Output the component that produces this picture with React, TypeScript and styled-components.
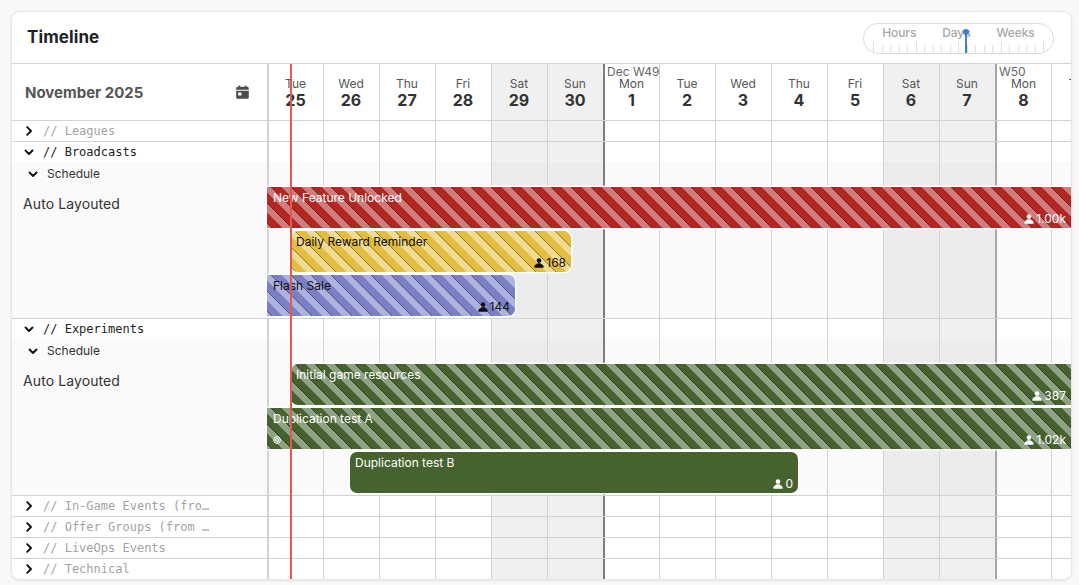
import styled, { createGlobalStyle } from "styled-components";

const GlobalStyle = createGlobalStyle`
  html, body {
    margin: 0;
    padding: 0;
    background: #f8f8f8;
    font-family: "Inter", "Liberation Sans", sans-serif;
  }
  * { box-sizing: border-box; }
`;

const LINE = "#d2d2d2";

const Page = styled.div`
  width: 1079px;
  height: 585px;
  padding: 11px 7px 5px 11px;
  overflow: hidden;
`;

const Card = styled.div`
  position: relative;
  width: 1061px;
  height: 569px;
  background: #fff;
  border: 1px solid #e6e6e6;
  border-radius: 9px;
  box-shadow: 0 1px 3px rgba(0, 0, 0, 0.08);
  overflow: hidden;
`;

const TopBar = styled.header`
  height: 52px;
  padding: 0 17px 0 15px;
  display: flex;
  align-items: center;
  justify-content: space-between;
  border-bottom: 1px solid ${LINE};
`;

const Title = styled.h1`
  margin: -2px 0 0;
  font-size: 17px;
  letter-spacing: 0.1px;
  font-weight: 700;
  color: #222;
`;

const Zoomer = styled.div`
  position: relative;
  width: 191px;
  height: 31px;
  margin-top: 1px;
  border: 1px solid #dcdcdc;
  border-radius: 15px;
  padding: 2px 8px 0;
  display: flex;
  flex-direction: column;
  justify-content: space-between;
`;

const ZoomLabels = styled.div`
  display: flex;
  justify-content: center;
  gap: 26px;
  font-size: 12px;
  letter-spacing: -0.1px;
  line-height: 14px;
  font-weight: 500;
  color: #a8a8a8;
`;

const Ruler = styled.div`
  display: flex;
  justify-content: space-between;
  align-items: flex-end;
  padding: 0 1px 0 1px;
`;

const Tick = styled.i<{ $major: boolean }>`
  width: 1px;
  height: ${(p) => (p.$major ? 11 : 8)}px;
  background: #e0e0e0;
`;

const Needle = styled.div`
  position: absolute;
  left: 101px;
  top: 6px;
  bottom: 0;
  width: 2px;
  background: #3f7fd0;
  &::before {
    content: "";
    position: absolute;
    top: -1px;
    left: -2px;
    width: 6px;
    height: 6px;
    border-radius: 50%;
    background: #3f7fd0;
  }
`;

const Row = styled.div<{ $height: number; $line?: boolean; $tint?: boolean }>`
  display: flex;
  height: ${(p) => p.$height}px;
  background: ${(p) => (p.$tint ? "#fafafa" : "#fff")};
  border-bottom: ${(p) => (p.$line ? `1px solid ${LINE}` : "none")};
`;

const Side = styled.div`
  flex: 0 0 257px;
  border-right: 2px solid ${LINE};
  overflow: hidden;
`;

const MonthSide = styled(Side)`
  display: flex;
  align-items: center;
  justify-content: space-between;
  padding: 0 18px 0 13px;
  font-size: 15px;
  font-weight: 700;
  color: #555;
`;

const RowSide = styled(Side)`
  display: flex;
  align-items: center;
  gap: 9px;
  padding-left: 12px;
`;

const GroupName = styled.span<{ $muted?: boolean }>`
  font-family: "DejaVu Sans Mono", "Liberation Mono", monospace;
  font-size: 12px;
  color: ${(p) => (p.$muted ? "#a3a3a3" : "#222")};
  white-space: nowrap;
`;

const ScheduleSide = styled(Side)`
  padding: 0;
`;

const ScheduleHead = styled.div`
  display: flex;
  align-items: center;
  gap: 9px;
  height: 23px;
  padding-left: 16px;
  font-size: 12px;
  color: #333;
`;

const LaneLabel = styled.div`
  margin-top: 10px;
  padding-left: 11px;
  font-size: 14px;
  letter-spacing: 0.1px;
  line-height: 17px;
  color: #333;
`;

const Track = styled.div`
  position: relative;
  flex: 1;
  display: flex;
  min-width: 0;
`;

type Edge = "month" | "week" | undefined;
const edgeColor = (e: Edge) => (e === "month" ? "#7c7c7c" : e === "week" ? "#a6a6a6" : LINE);

const DayCell = styled.div<{ $weekend: boolean; $tint?: boolean; $before: Edge; $after: Edge }>`
  flex: 0 0 56px;
  background: ${(p) => (p.$weekend ? (p.$tint ? "#ececec" : "#f0f0f0") : "transparent")};
  border-right: 1px solid ${(p) => edgeColor(p.$before)};
  border-left: ${(p) => (p.$after ? `1px solid ${edgeColor(p.$after)}` : "none")};
  &:first-child {
    flex-basis: 55px;
  }
`;

const HeadCell = styled(DayCell)`
  position: relative;
  display: flex;
  flex-direction: column;
  align-items: center;
  justify-content: center;
  padding: 1px 1px 0 0;
`;

const DayName = styled.span`
  font-size: 12px;
  line-height: 14px;
  color: #555;
`;

const DayNum = styled.span`
  font-size: 16px;
  line-height: 18px;
  font-weight: 700;
  color: #333;
`;

const WeekTag = styled.span`
  position: absolute;
  top: 1px;
  left: 2px;
  font-size: 12px;
  line-height: 14px;
  color: #666;
  white-space: nowrap;
`;

const Lanes = styled.div`
  position: absolute;
  top: 25px;
  left: -2px;
  right: 0;
  display: flex;
  flex-direction: column;
  gap: 3px;
`;

const palettes = {
  red: { base: "#b32723", light: "#d17c7c", edge: "#7f1c19", text: "#fff" },
  yellow: { base: "#e3bd3f", light: "#efdb92", edge: "#94792a", text: "#111" },
  blue: { base: "#7a80c4", light: "#aeb2de", edge: "#50547f", text: "#111" },
  green: { base: "#46632f", light: "#8fa384", edge: "#2a3b1c", text: "#fff" },
};

type Tone = keyof typeof palettes;

const stripes = (t: Tone) => {
  const { base, light, edge } = palettes[t];
  return `repeating-linear-gradient(45deg, ${light} 0 3.2px, ${edge} 3.2px 4.2px, ${base} 4.2px 10.9px, ${light} 10.9px 14.14px)`;
};

const Bar = styled.div<{ $tone: Tone; $from: number; $width: number; $striped: boolean; $roundL: boolean; $roundR: boolean }>`
  height: 41px;
  margin-left: ${(p) => p.$from}px;
  width: ${(p) => p.$width}px;
  padding: 3px 5px 2px ${(p) => (p.$roundL ? 5 : 6)}px;
  display: flex;
  flex-direction: column;
  justify-content: space-between;
  color: ${(p) => palettes[p.$tone].text};
  font-size: 12px;
  line-height: 15px;
  border-radius: ${(p) => (p.$roundL ? 7 : 0)}px ${(p) => (p.$roundR ? 7 : 0)}px ${(p) => (p.$roundR ? 7 : 0)}px ${(p) => (p.$roundL ? 7 : 0)}px;
  box-shadow: 0 0 0 1.5px rgba(255, 255, 255, 0.9);
  background: ${(p) => (p.$striped ? stripes(p.$tone) : palettes[p.$tone].base)};
`;

const BarFoot = styled.div`
  display: flex;
  align-items: center;
  justify-content: space-between;
`;

const Count = styled.span`
  margin-left: auto;
  display: flex;
  align-items: center;
  gap: 2px;
`;

const NowLine = styled.div`
  position: absolute;
  left: 278px;
  top: 52px;
  bottom: 0;
  width: 2px;
  background: #e25a4e;
  z-index: 3;
`;

const Chevron = ({ open }: { open?: boolean }) => (
  <svg width="10" height="10" viewBox="0 0 10 10" fill="none" stroke={"#111"} strokeWidth="1.9" strokeLinecap="round" strokeLinejoin="round" style={{ flexShrink: 0 }}>
    {open ? <path d="M1.5 3.5 5 7l3.5-3.5" /> : <path d="M3.2 1.2 7 5 3.2 8.8" />}
  </svg>
);

const CalendarIcon = () => (
  <svg width="13" height="14" viewBox="0 0 13 14" fill="#4d4d4d">
    <path d="M2.6.4h1.5v1.4h4.8V.4h1.5v1.4h.8c.9 0 1.6.7 1.6 1.6v1.4H.2V3.4c0-.9.7-1.6 1.6-1.6h.8V.4Z" />
    <path d="M.2 5.8h12.6v6.4c0 .9-.7 1.6-1.6 1.6H1.8c-.9 0-1.6-.7-1.6-1.6V5.8Zm2 1.8v2.8h3.2V7.6H2.2Z" fillRule="evenodd" />
  </svg>
);

const PersonIcon = () => (
  <svg width="10" height="10" viewBox="0 0 10 10" fill="currentColor" style={{ flexShrink: 0 }}>
    <circle cx="5" cy="2.6" r="2.3" />
    <path d="M3.4 5.2h3.2c.4 1.2 3 1.2 3 3.4V9.8H.4V8.6c0-2.2 2.6-2.2 3-3.4Z" />
  </svg>
);

const TargetIcon = () => (
  <svg width="8" height="8" viewBox="0 0 8 8" fill="none" stroke="currentColor" strokeWidth="1">
    <circle cx="4" cy="4" r="3.4" />
    <circle cx="4" cy="4" r="1.5" />
  </svg>
);

const days = [
  { name: "Tue", num: 25 },
  { name: "Wed", num: 26 },
  { name: "Thu", num: 27 },
  { name: "Fri", num: 28 },
  { name: "Sat", num: 29, weekend: true },
  { name: "Sun", num: 30, weekend: true, before: "month" as Edge },
  { name: "Mon", num: 1, after: "month" as Edge, tag: "Dec W49" },
  { name: "Tue", num: 2 },
  { name: "Wed", num: 3 },
  { name: "Thu", num: 4 },
  { name: "Fri", num: 5 },
  { name: "Sat", num: 6, weekend: true },
  { name: "Sun", num: 7, weekend: true, before: "week" as Edge },
  { name: "Mon", num: 8, after: "week" as Edge, tag: "W50" },
  { name: "Tue", num: 9 },
];

const Cells = ({ tint }: { tint?: boolean }) => (
  <>
    {days.map((d) => (
      <DayCell key={d.num} $weekend={!!d.weekend} $tint={tint} $before={d.before} $after={d.after} />
    ))}
  </>
);

const ticks = Array.from({ length: 21 }, (_, i) => i);

interface BarData {
  title: string;
  tone: Tone;
  from: number;
  width: number;
  count: string;
  striped?: boolean;
  roundL?: boolean;
  roundR?: boolean;
  target?: boolean;
}

const broadcastBars: BarData[] = [
  { title: "New Feature Unlocked", tone: "red", from: 0, width: 804, count: "1.00k", striped: true },
  { title: "Daily Reward Reminder", tone: "yellow", from: 24, width: 280, count: "168", striped: true, roundL: true, roundR: true },
  { title: "Flash Sale", tone: "blue", from: 0, width: 248, count: "144", striped: true, roundR: true },
];

const experimentBars: BarData[] = [
  { title: "Initial game resources", tone: "green", from: 24, width: 780, count: "387", striped: true, roundL: true },
  { title: "Duplication test A", tone: "green", from: 0, width: 804, count: "1.02k", striped: true, target: true },
  { title: "Duplication test B", tone: "green", from: 83, width: 448, count: "0", roundL: true, roundR: true },
];

const CollapsedRow = ({ name, open, muted, line = true, height = 21 }: { name: string; open?: boolean; muted?: boolean; line?: boolean; height?: number }) => (
  <Row $height={height} $line={line}>
    <RowSide>
      <Chevron open={open} />
      <GroupName $muted={muted}>{name}</GroupName>
    </RowSide>
    <Track>
      <Cells />
    </Track>
  </Row>
);

const ScheduleRow = ({ bars }: { bars: BarData[] }) => (
  <Row $height={157} $line $tint>
    <ScheduleSide>
      <ScheduleHead>
        <Chevron open />
        Schedule
      </ScheduleHead>
      <LaneLabel>Auto Layouted</LaneLabel>
    </ScheduleSide>
    <Track>
      <Cells tint />
      <Lanes>
        {bars.map((b) => (
          <Bar key={b.title} $tone={b.tone} $from={b.from} $width={b.width} $striped={!!b.striped} $roundL={!!b.roundL} $roundR={!!b.roundR}>
            <span>{b.title}</span>
            <BarFoot>
              {b.target && <TargetIcon />}
              <Count>
                <PersonIcon />
                {b.count}
              </Count>
            </BarFoot>
          </Bar>
        ))}
      </Lanes>
    </Track>
  </Row>
);

export default function App() {
  return (
    <Page>
      <GlobalStyle />
      <Card>
        <TopBar>
          <Title>Timeline</Title>
          <Zoomer>
            <ZoomLabels>
              <span>Hours</span>
              <span>Days</span>
              <span>Weeks</span>
            </ZoomLabels>
            <Ruler>
              {ticks.map((t) => (
                <Tick key={t} $major={t % 5 === 0} />
              ))}
            </Ruler>
            <Needle />
          </Zoomer>
        </TopBar>
        <Row $height={57} $line>
          <MonthSide>
            November 2025
            <CalendarIcon />
          </MonthSide>
          <Track>
            {days.map((d) => (
              <HeadCell key={d.num} $weekend={!!d.weekend} $before={d.before} $after={d.after}>
                {d.tag && <WeekTag>{d.tag}</WeekTag>}
                <DayName>{d.name}</DayName>
                <DayNum>{d.num}</DayNum>
              </HeadCell>
            ))}
          </Track>
        </Row>
        <CollapsedRow name="// Leagues" muted />
        <CollapsedRow name="// Broadcasts" open line={false} height={20} />
        <ScheduleRow bars={broadcastBars} />
        <CollapsedRow name="// Experiments" open line={false} height={20} />
        <ScheduleRow bars={experimentBars} />
        <CollapsedRow name="// In-Game Events (fro…" muted />
        <CollapsedRow name="// Offer Groups (from …" muted />
        <CollapsedRow name="// LiveOps Events" muted />
        <CollapsedRow name="// Technical" muted line={false} height={20} />
        <NowLine />
      </Card>
    </Page>
  );
}
